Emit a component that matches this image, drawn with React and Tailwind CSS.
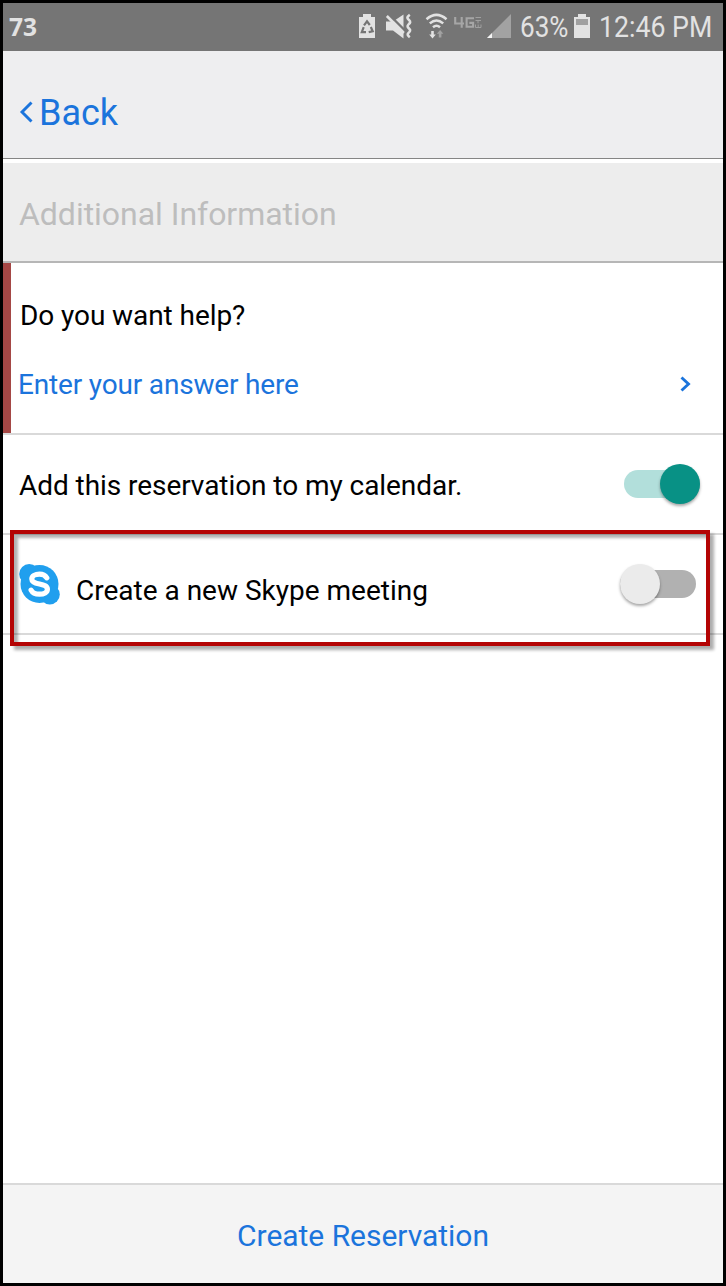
import React from 'react';

function StatusIcons() {
  return (
    <svg className="block shrink-0" width="158" height="48" viewBox="355 3 158 48" fill="#e2e2e2">
      {/* battery with recycle mark */}
      <path d="M359 17h4v-3h8v3h4v21h-16z" />
      <g fill="none" stroke="#757575" strokeWidth="2.200">
        <path d="M364 25.300l3-4 2.800 3.700M370.800 27l1.900 4.200-4 .9M366 32.200h-4.200l1.900-5" />
      </g>
      {/* muted speaker */}
      <path d="M386 21.500h7l10.500-7v24l-10.500-8h-7z" />
      <path d="M388.500 14.200l16.500 16.500" stroke="#757575" strokeWidth="2.400" fill="none" />
      <path d="M386.800 16l17 17" stroke="#e2e2e2" strokeWidth="2.600" fill="none" />
      <path
        d="M409.800 14.800c-3.500 2.500-2.600 3.600-.8 5.200s1.400 2.800-.4 4.400-1 2.900.6 4.300 1 2.700-.7 4.200-.6 2.900 1.300 4.300"
        stroke="#e2e2e2"
        strokeWidth="2.600"
        fill="none"
      />
      {/* wifi */}
      <g fill="none" stroke="#e2e2e2" strokeWidth="2.500">
        <path d="M426.500 19.200q10-8.600 20 0" />
        <path d="M429.800 23.400q6.700-5.800 13.400 0" />
        <path d="M433 27.300q3.500-3 7 0" />
      </g>
      <path d="M431.200 31h2.600v3.600h2l-3.300 3.800-3.300-3.800h2z" />
      <path d="M438.800 37.500h2.600v-3.800h2l-3.300-3.700-3.300 3.700h2z" fill="#a2a2a2" />
      {/* 4G LTE badge */}
      <g fill="none" stroke="#a6a6a6" strokeWidth="2.100">
        <path d="M455.200 17v6.500h8.800M461.700 17v10.800" />
        <path d="M474 18.200h-7.400v8.600h6.500v-3.900h-3.800" />
      </g>
      <g fill="none" stroke="#a0a0a0" strokeWidth="1">
        <path d="M475.500 17.500h5.500M475.500 20.500h5.500M478 20.500v2.800M475.500 24.500v3h5.500v-3M478.200 24.500v3" />
      </g>
      {/* signal */}
      <path d="M487 38l24-24v24z" fill="#a2a2a2" />
      <path d="M487 38l5-5v5z" fill="#f5f5f5" />
    </svg>
  );
}

function BatteryIcon() {
  return (
    <svg className="block shrink-0" width="16" height="24" viewBox="0 0 16 24">
      <path d="M0 3h4V0h8v3h4v21H0z" fill="#e2e2e2" />
      <path d="M2 5h12v6H2z" fill="#a0a0a0" />
    </svg>
  );
}

function SkypeIcon() {
  return (
    <svg className="block shrink-0" width="41" height="42" viewBox="0 0 41 42">
      <g fill="#209fee">
        <circle cx="20.500" cy="21" r="19" />
        <circle cx="10.200" cy="11" r="10" />
        <circle cx="30.800" cy="31.500" r="10" />
      </g>
      <path
        d="M27.800 14.800C26 12 23.500 11.200 20.500 11.200c-4.400 0-7.700 1.700-7.700 4.700 0 3.200 3.300 4.200 7.700 5.100 4.600 1 7.900 2 7.900 5.300 0 3.200-3.500 4.900-7.900 4.900-4.200 0-6.900-1.100-8.400-4.100"
        fill="none"
        stroke="#fff"
        strokeWidth="5.200"
        strokeLinecap="round"
      />
    </svg>
  );
}

function Chevron({ className, d, w, h }) {
  return (
    <svg className={className} width={w} height={h} viewBox={`0 0 ${w} ${h}`} fill="none" stroke="#1b74dc">
      <path d={d} strokeWidth="2.900" />
    </svg>
  );
}

export default function App() {
  return (
    <div className="relative flex h-[1286px] w-[726px] flex-col overflow-hidden border-[3px] border-black bg-white font-['Roboto',sans-serif] whitespace-nowrap text-black">
      <div className="flex h-12 shrink-0 items-center bg-[#757575] text-[#e2e2e2]">
        <div className="w-[352px] shrink-0 pb-[3px] pl-[6px] font-['Open_Sans',sans-serif] text-[25px] leading-8 font-bold">
          <span className="inline-block origin-left scale-x-[0.98]">73</span>
        </div>
        <StatusIcons />
        <div className="w-[62px] shrink-0 pl-[7px]">
          <span className="inline-block origin-left scale-x-[0.87] text-[30px] leading-9">63%</span>
        </div>
        <div className="pb-[2px] -ml-px">
          <BatteryIcon />
        </div>
        <div className="w-[121px] shrink-0 pl-[9px]">
          <span className="inline-block origin-left scale-x-[0.89] text-[30px] leading-9">12:46 PM</span>
        </div>
      </div>

      <header className="flex h-[108px] shrink-0 items-center border-b border-[#858585] bg-[#eeeef0] pt-[15px] pl-4 text-[#1b74dc]">
        <Chevron className="block" w={14} h={22} d="M12.500 1.500L3 11l9.500 9.500" />
        <span className="pt-[2px] pl-[6px] text-[36px] leading-[42px]">Back</span>
      </header>

      <h1 className="mt-1 flex h-[100px] shrink-0 items-center border-b-2 border-[#b6b6b6] bg-[#ededed] pt-[3px] pl-4 text-[32px] font-normal tracking-[-0.03px] text-[#bdbdbd]">
        Additional Information
      </h1>

      <section className="flex h-[172px] shrink-0 flex-col border-b-2 border-[#d9d9d9]">
        <div className="flex h-[170px] flex-col border-l-8 border-[#a54745] pt-[35px]">
          <p className="pl-[9px] text-[28px] leading-9 tracking-[-0.08px]">Do you want help?</p>
          <div className="mt-[33px] flex items-center justify-between pr-8 pl-[7px] text-[#1b74dc]">
            <span className="text-[28px] leading-9 tracking-[-0.17px]">Enter your answer here</span>
            <Chevron className="-mt-[2px] block" w={11} h={16} d="M1.500 1.500L8.500 8l-7 6.500" />
          </div>
        </div>
      </section>

      <section className="flex h-[100px] shrink-0 items-center justify-between border-b-2 border-[#d9d9d9] pr-[23px] pl-4">
        <span className="pt-[3px] text-[28px] leading-9 tracking-[-0.06px]">Add this reservation to my calendar.</span>
        <div className="flex h-7 w-[76px] items-center justify-end rounded-full bg-[#b2dfdb]">
          <div className="size-10 shrink-0 rounded-full bg-[#089185] shadow-[0_2px_3px_rgba(0,0,0,0.35)]" />
        </div>
      </section>

      <section className="flex h-[100px] shrink-0 items-center border-b-2 border-[#d9d9d9] pr-[27px] pl-4">
        <SkypeIcon />
        <span className="grow pt-[13px] pl-4 text-[28px] leading-9">Create a new Skype meeting</span>
        <div className="flex h-7 w-[76px] items-center rounded-full bg-[#b1b1b1]">
          <div className="size-10 shrink-0 rounded-full bg-[#ebebeb] shadow-[0_2px_3px_rgba(0,0,0,0.35)]" />
        </div>
      </section>

      <main className="grow" />

      <footer className="flex h-[100px] shrink-0 items-center justify-center border-t-2 border-[#d9d9d9] bg-[#f4f4f4] pt-[2px] text-[30px] tracking-[-0.03px] text-[#1b74dc]">
        Create Reservation
      </footer>

      <div className="absolute top-[527px] left-[7px] h-[116px] w-[700px] border-4 border-[#b40404] shadow-[4px_4px_3px_rgba(0,0,0,0.32),inset_4px_4px_3px_rgba(0,0,0,0.3)]" />
    </div>
  );
}
